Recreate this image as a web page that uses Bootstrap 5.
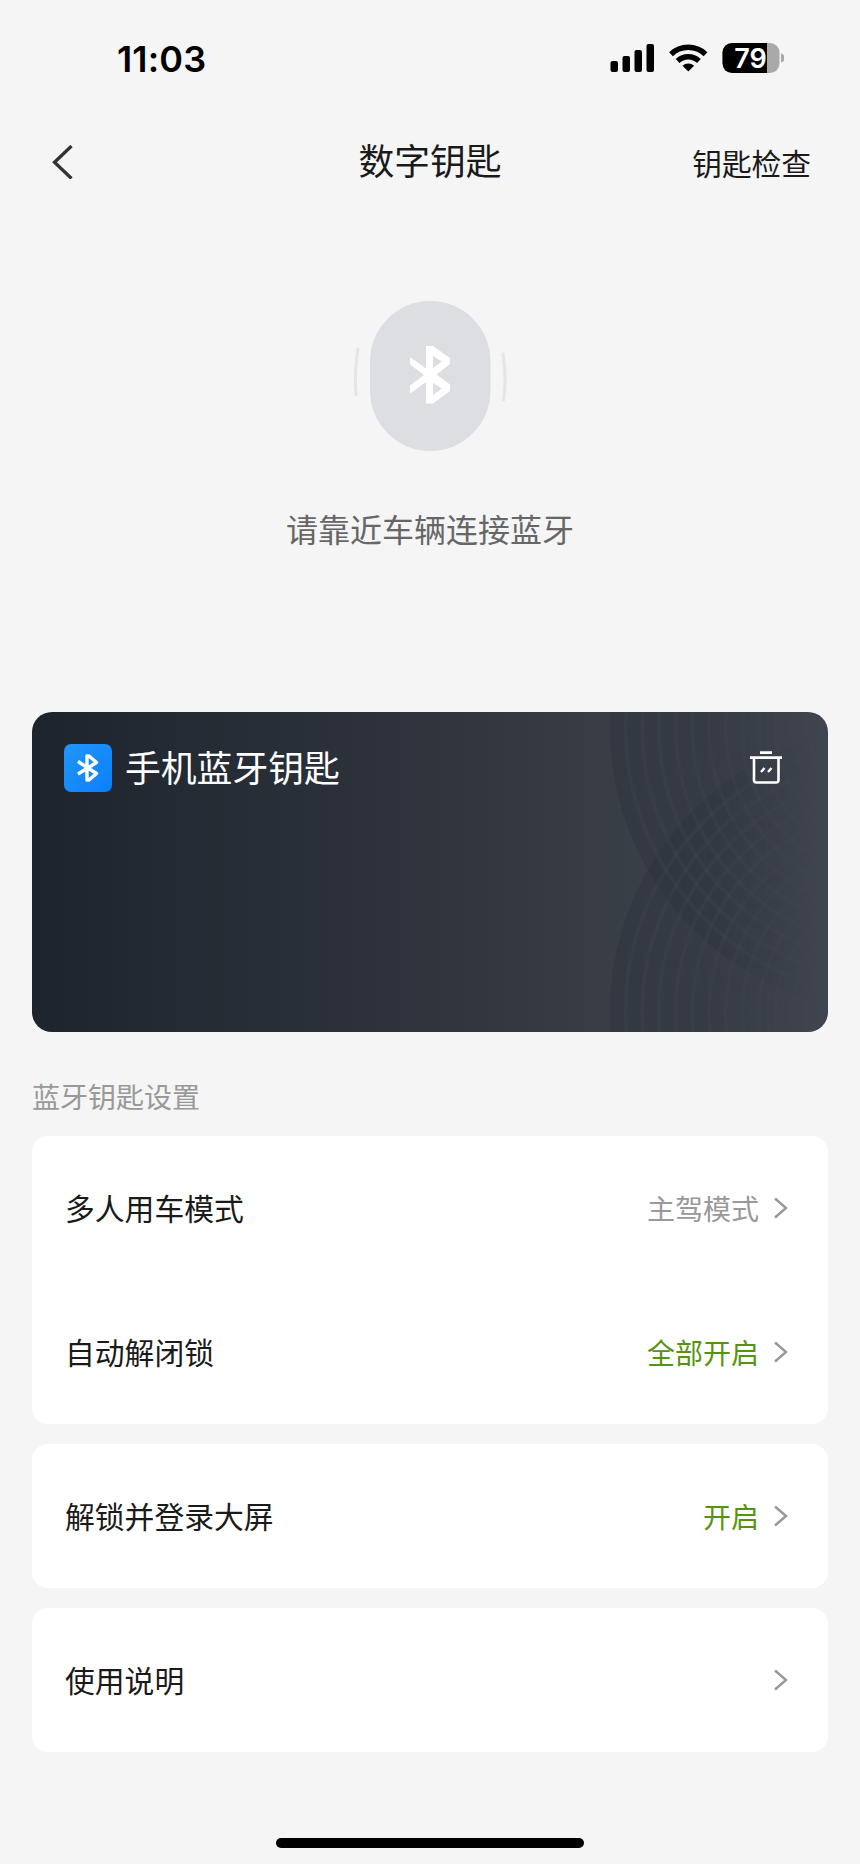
<!DOCTYPE html>
<html lang="zh-CN">
<head>
<meta charset="utf-8">
<meta name="viewport" content="width=device-width, initial-scale=1">
<title>数字钥匙</title>
<link rel="stylesheet" href="https://cdn.jsdelivr.net/npm/bootstrap@5.3.0/dist/css/bootstrap.min.css">
<style>
body{background:#f5f5f5;color:#1a1a1a;font-family:"Noto Sans CJK SC",sans-serif;font-weight:400;overflow:hidden}
svg{display:block;flex:none}
.screen{width:860px;height:1864px}
.statusbar{height:116px;padding:0 76px 0 117px;font-family:Inter,sans-serif;color:#000}
.clock{font-size:36px;font-weight:600;line-height:1;padding-top:2px;letter-spacing:.15px}
.topbar{height:92px;padding:0 49px 0 52px;line-height:1}
.side{width:198px}
.title{font-size:35.8px;padding-bottom:5px;margin-right:3px}
.check{font-size:29.7px;padding-top:1px}
.hero{height:504px;padding-top:92px}
.hint{font-size:32px;line-height:40px;color:#666;margin-top:56px}
.keycard{height:320px;margin:0 32px;border-radius:20px;background:linear-gradient(90deg,#1d242e 0%,#252c34 22%,#2f343d 50%,#393f46 75%,#40464f 100%)}
.rings{top:0;right:0}
.keyhead{padding:32px 45px 0 32px}
.keyname{font-size:35.8px;line-height:48px;color:#fff;margin:-5px 0 0 13px}
.bt{width:48px;height:48px;border-radius:7px;background:linear-gradient(135deg,#2196f8,#0b7ffb)}
.section-title{font-size:28px;line-height:40px;color:#999;margin:44px 32px 20px}
.panel{margin:0 32px 20px;border-radius:16px;background:#fff}
.entry{height:144px;padding:0 39px 0 33px;font-size:29.8px;line-height:40px}
.entry span{padding-bottom:2px}
.entry .value{font-size:28px;color:#999;margin-right:14px;padding-bottom:1px}
.entry .value.on{color:#559411}
.home{width:308px;height:10px;border-radius:5px;background:#000;margin:86px auto 0}
</style>
</head>
<body>
<div class="screen d-flex flex-column">
  <header class="statusbar d-flex align-items-center justify-content-between">
    <span class="clock">11:03</span>
    <svg width="176" height="32" viewBox="608 42 176 32">
      <rect x="610.5" y="61" width="7.5" height="11" rx="2"/><rect x="622.5" y="56" width="7.5" height="16" rx="2"/><rect x="634.5" y="50" width="7.5" height="22" rx="2"/><rect x="646.5" y="44" width="7.5" height="28" rx="2"/>
      <g fill="none" stroke="#000" stroke-width="5.4"><path d="M671 54.200a25 25 0 0 1 34.500 0"/><path d="M677.600 61a15.500 15.500 0 0 1 21.300 0"/></g>
      <path d="M688.300 71.600l-5.800-5.900a8.500 8.500 0 0 1 11.600 0z"/>
      <clipPath id="cell"><rect x="722.500" y="43" width="57" height="30" rx="9.500"/></clipPath>
      <g clip-path="url(#cell)"><path fill="#a9a9a9" d="M722 43h58v30h-58z"/><path d="M722 43h45v30h-45z"/></g>
      <path fill="#a9a9a9" d="M781 53.500c5 1 5 8 0 9z"/>
      <text x="750.500" y="67.600" font-family="Inter" font-size="27" font-weight="600" fill="#fff" text-anchor="middle">79</text>
    </svg>
  </header>
  <nav class="topbar d-flex align-items-center justify-content-between">
    <div class="side"><svg width="22" height="34" viewBox="52 145 22 34"><path d="M71.500 146L54.500 162.300 71.500 178.500" fill="none" stroke="#333" stroke-width="3.300"/></svg></div>
    <div class="title">数字钥匙</div>
    <div class="side check text-end">钥匙检查</div>
  </nav>
  <section class="hero d-flex flex-column align-items-center">
    <svg width="160" height="152" viewBox="350 300 160 152">
      <rect x="370" y="301" width="120.500" height="150" rx="60.200" fill="#dcdee2"/>
      <path d="M358 349q-4 24-2 46M503 354q4 24 .5 46" fill="none" stroke="#e4e5e7" stroke-width="3" stroke-linecap="round"/>
      <path fill="#fff" fill-rule="evenodd" d="M426 346h7l17 12v6l-13.500 10.500 13.500 10v6.500l-17 12.500h-7v-21.500l-16 11.500v-8l14-10.500-14-10.500v-7.500l16 11.500zM433 356v12l9-6.500zM433 383v12l9-6.500z"/>
    </svg>
    <div class="hint">请靠近车辆连接蓝牙</div>
  </section>
  <section class="keycard position-relative overflow-hidden">
    <svg class="rings position-absolute" width="228" height="320" viewBox="600 712 228 320">
      <defs><linearGradient id="fade" gradientUnits="userSpaceOnUse" x1="600" y1="0" x2="828" y2="0"><stop stop-color="#fff"/><stop offset=".5" stop-color="#fff" stop-opacity=".8"/><stop offset="1" stop-color="#fff" stop-opacity="0"/></linearGradient><mask id="m"><path fill="url(#fade)" d="M600 712h228v320H600z"/></mask></defs>
      <g mask="url(#m)" id="ringset"></g>
    </svg>
    <div class="keyhead position-relative d-flex align-items-center">
      <div class="bt d-flex align-items-center justify-content-center"><svg width="24" height="32" viewBox="0 0 24 32"><path d="M2 9.500L20.500 21.500 13 28H11V4H13L20.500 10.500 2 22" fill="none" stroke="#fff" stroke-width="3.400" stroke-linejoin="round"/></svg></div>
      <div class="keyname">手机蓝牙钥匙</div>
      <svg class="ms-auto" width="34" height="34" viewBox="749 751 34 34"><path d="M760 752.600h12M750 757.600h32" stroke="#fff" stroke-width="2.600"/><path d="M754 758v22q0 2.500 2.500 2.500h19.500q2.500 0 2.500-2.500v-22" fill="none" stroke="#fff" stroke-width="2.600"/><path d="M761 772l3.500-4M768 772l3.500-4" stroke="#fff" stroke-width="2.400"/></svg>
    </div>
  </section>
  <div class="section-title">蓝牙钥匙设置</div>
  <main>
    <div class="panel">
      <div class="entry d-flex align-items-center"><span class="me-auto">多人用车模式</span><span class="value">主驾模式</span><svg width="16" height="22" viewBox="0 0 16 22"><path d="M2 1.500L13 11 2 20.500" fill="none" stroke="#999" stroke-width="2.500"/></svg></div>
      <div class="entry d-flex align-items-center"><span class="me-auto">自动解闭锁</span><span class="value on">全部开启</span><svg width="16" height="22" viewBox="0 0 16 22"><path d="M2 1.500L13 11 2 20.500" fill="none" stroke="#999" stroke-width="2.500"/></svg></div>
    </div>
    <div class="panel"><div class="entry d-flex align-items-center"><span class="me-auto">解锁并登录大屏</span><span class="value on">开启</span><svg width="16" height="22" viewBox="0 0 16 22"><path d="M2 1.500L13 11 2 20.500" fill="none" stroke="#999" stroke-width="2.500"/></svg></div></div>
    <div class="panel mb-0"><div class="entry d-flex align-items-center"><span class="me-auto">使用说明</span><svg width="16" height="22" viewBox="0 0 16 22"><path d="M2 1.500L13 11 2 20.500" fill="none" stroke="#999" stroke-width="2.500"/></svg></div></div>
  </main>
  <div class="home"></div>
</div>
<script src="https://cdn.jsdelivr.net/npm/bootstrap@5.3.0/dist/js/bootstrap.bundle.min.js"></script>
<script>
// Two families of concentric rings crossing on the right side of the card
let lines = '', shade = '';
for (const cy of [728, 1012]) {
  shade += `<circle cx="895" cy="${cy}" r="285" fill="#2a303a" opacity=".38"/>`;
  for (let r = 269.5; r > 80; r -= 16.7) lines += `<circle cx="895" cy="${cy}" r="${r}"/>`;
}
document.getElementById('ringset').innerHTML =
  `${shade}<g fill="none" stroke="#48505a" stroke-width="4" stroke-opacity=".2">${lines}</g>`;
</script>
</body>
</html>
